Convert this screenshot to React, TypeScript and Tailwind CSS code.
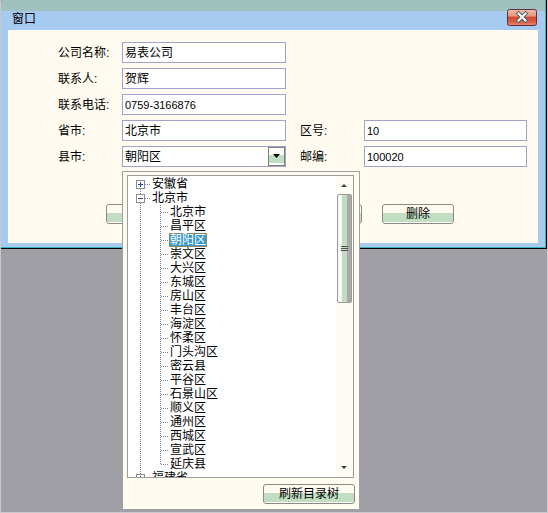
import type { ReactNode } from "react";

// Beijing districts shown under the expanded node of the drop-down tree.
const DISTRICTS = [
  "北京市",
  "昌平区",
  "朝阳区",
  "崇文区",
  "大兴区",
  "东城区",
  "房山区",
  "丰台区",
  "海淀区",
  "怀柔区",
  "门头沟区",
  "密云县",
  "平谷区",
  "石景山区",
  "顺义区",
  "通州区",
  "西城区",
  "宣武区",
  "延庆县",
];

const LINE = "#7c86a0";

function CloseButton() {
  return (
    <svg width="30" height="17" viewBox="0 0 30 17" className="-mt-[2px] shrink-0">
      <defs>
        <linearGradient id="close-bg" x1="0" y1="0" x2="0" y2="1">
          <stop offset="0" stopColor="#f2c0a8" />
          <stop offset="0.4" stopColor="#e8987c" />
          <stop offset="0.5" stopColor="#d04a32" />
          <stop offset="0.75" stopColor="#d85a42" />
          <stop offset="1" stopColor="#ea8a70" />
        </linearGradient>
      </defs>
      <rect x="0.5" y="0.5" width="29" height="16" rx="2" fill="url(#close-bg)" stroke="#5c2c4c" />
      <path d="M11.5 4.5 L18.5 11.5 M18.5 4.5 L11.5 11.5" stroke="#506070" strokeWidth="4" strokeLinecap="square" />
      <path d="M11.5 4.5 L18.5 11.5 M18.5 4.5 L11.5 11.5" stroke="#f4f8f0" strokeWidth="2" strokeLinecap="square" />
    </svg>
  );
}

function Field({
  label,
  value,
  numeric,
  width = "w-[164px]",
  combo,
}: {
  label: string;
  value: string;
  numeric?: boolean;
  width?: string;
  combo?: boolean;
}) {
  return (
    <>
      <span className="w-[64px] shrink-0 text-[12px] leading-[14px] text-black">{label}</span>
      <div
        className={`${width} h-[21px] shrink-0 border border-[#a2a2c8] bg-white flex items-center pl-[2px] pr-[2px]`}
      >
        <span className={`flex-1 leading-[14px] ${numeric ? "text-[11px]" : "text-[12px]"}`}>{value}</span>
        {combo && (
          <div className="w-[17px] h-[19px] -mr-[2px] border border-[#808080] bg-[linear-gradient(#fdfdf8_0%,#fdfdf8_40%,#c2dec2_40%,#c2dec2_90%,#fdfdf8_90%)] flex items-center justify-center">
            <svg width="9" height="5" viewBox="0 0 9 5">
              <polygon points="1,0 8,0 4.5,4" fill="#000" />
            </svg>
          </div>
        )}
      </div>
    </>
  );
}

function Btn({ children, className = "" }: { children?: ReactNode; className?: string }) {
  return (
    <div
      className={`h-[20px] shrink-0 rounded-[3px] border border-[#8a8a8a] bg-[linear-gradient(#fffbf0_0%,#fffbf0_45%,#c2dec2_45%,#c2dec2_92%,#fffbf0_92%)] flex items-center justify-center text-[12px] leading-[14px] ${className}`}
    >
      {children}
    </div>
  );
}

function RootRow({
  label,
  expanded,
  first,
  last,
}: {
  label: string;
  expanded?: boolean;
  first?: boolean;
  last?: boolean;
}) {
  return (
    <div className="flex h-[14px] items-center shrink-0">
      <svg width="24" height="14" viewBox="0 0 24 14" className="shrink-0" shapeRendering="crispEdges">
        {!first && <line x1="12.5" y1="0" x2="12.5" y2="3" stroke={LINE} strokeDasharray="1 1" />}
        {(!last || expanded) && <line x1="12.5" y1="12" x2="12.5" y2="14" stroke={LINE} strokeDasharray="1 1" />}
        <line x1="17" y1="7.5" x2="23" y2="7.5" stroke={LINE} strokeDasharray="1 1" />
        <rect x="8.5" y="3.5" width="8" height="8" fill="#fff" stroke="#8c8c8c" />
        <line x1="10" y1="7.5" x2="15" y2="7.5" stroke="#2c48b0" />
        {!expanded && <line x1="12.5" y1="5" x2="12.5" y2="10" stroke="#2c48b0" />}
      </svg>
      <span className="text-[12px] leading-[14px] whitespace-nowrap">{label}</span>
    </div>
  );
}

function ChildRow({ label, selected, last }: { label: string; selected?: boolean; last?: boolean }) {
  return (
    <div className="flex h-[14px] items-center shrink-0">
      <svg width="41" height="14" viewBox="0 0 41 14" className="shrink-0" shapeRendering="crispEdges">
        <line x1="12.5" y1="0" x2="12.5" y2="14" stroke={LINE} strokeDasharray="1 1" />
        <line x1="32.5" y1="0" x2="32.5" y2={last ? 8 : 14} stroke={LINE} strokeDasharray="1 1" />
        <line x1="33" y1="7.5" x2="41" y2="7.5" stroke={LINE} strokeDasharray="1 1" />
      </svg>
      <span
        className={`h-[14px] border text-[12px] leading-[12px] whitespace-nowrap ${
          selected ? "bg-[#3a9acb] text-white border-dotted border-[#d8780c]" : "border-transparent text-black"
        }`}
      >
        {label}
      </span>
    </div>
  );
}

function ScrollBar() {
  return (
    <div className="w-[17px] shrink-0 bg-[#fdfbf3] flex flex-col">
      <svg width="17" height="17" viewBox="0 0 17 17" className="shrink-0">
        <polygon points="5,11 11,11 8,8" fill="#3c3c3c" />
      </svg>
      <div className="ml-[1px] mt-[1px] w-[15px] h-[109px] rounded-[2px] border border-[#9c9c9c] bg-[linear-gradient(to_right,#f6f9f4_0%,#f6f9f4_30%,#c2dcc2_30%,#c2dcc2_72%,#a9a9a9_72%)] flex items-center justify-center">
        <svg width="7" height="6" viewBox="0 0 7 6" shapeRendering="crispEdges">
          <line x1="0" y1="0.5" x2="7" y2="0.5" stroke="#505050" />
          <line x1="0" y1="2.5" x2="7" y2="2.5" stroke="#505050" />
          <line x1="0" y1="4.5" x2="7" y2="4.5" stroke="#505050" />
        </svg>
      </div>
      <svg width="17" height="17" viewBox="0 0 17 17" className="mt-auto shrink-0">
        <polygon points="5,6 11,6 8,9" fill="#3c3c3c" />
      </svg>
    </div>
  );
}

function TreeDropdown() {
  return (
    <div className="absolute left-[121px] top-[171px] w-[238px] h-[339px] border border-[#a0a0a0] bg-[#fffbf0] pl-[4px] pr-[4px] pt-[3px] flex flex-col">
      <div className="w-[227px] h-[303px] shrink-0 border border-[#9c9c9c] bg-white flex">
        <div className="w-[208px] pt-[1px] flex flex-col overflow-hidden">
          <RootRow label="安徽省" first />
          <RootRow label="北京市" expanded />
          {DISTRICTS.map((d, i) => (
            <ChildRow key={d} label={d} selected={d === "朝阳区"} last={i === DISTRICTS.length - 1} />
          ))}
          <RootRow label="福建省" />
        </div>
        <ScrollBar />
      </div>
      <Btn className="w-[92px] mt-[6px] ml-auto">刷新目录树</Btn>
    </div>
  );
}

export default function App() {
  return (
    <div className="w-[548px] h-[513px] bg-[#a09fa5] border-x border-b border-[#c9c8cc] relative overflow-hidden font-['Liberation_Sans','Noto_Sans_CJK_SC',sans-serif] text-black">
      <div className="border-r border-b border-black">
        <div className="border-r border-b border-[#3ab4b4]">
          <div className="h-[11px] bg-[#a0c2bc] rounded-tl-[3px]" />
          <div className="h-[19px] bg-[#a6caf0] flex items-start justify-between pl-[11px] pr-[8px]">
            <span className="mt-[1px] text-[12px] leading-[14px]">窗口</span>
            <CloseButton />
          </div>
          <div className="bg-[#a6caf0] pl-[7px] pr-[7px] pb-[4px]">
            <div className="h-[213px] bg-[#fffbf0] pl-[50px] pt-[12px] flex flex-col">
              <div className="flex items-center h-[21px]">
                <Field label="公司名称:" value="易表公司" />
              </div>
              <div className="flex items-center h-[21px] mt-[5px]">
                <Field label="联系人:" value="贺辉" />
              </div>
              <div className="flex items-center h-[21px] mt-[5px]">
                <Field label="联系电话:" value="0759-3166876" numeric />
              </div>
              <div className="flex items-center h-[21px] mt-[5px]">
                <Field label="省市:" value="北京市" />
                <div className="w-[14px]" />
                <Field label="区号:" value="10" numeric width="w-[163px]" />
              </div>
              <div className="flex items-center h-[21px] mt-[5px]">
                <Field label="县市:" value="朝阳区" combo />
                <div className="w-[14px]" />
                <Field label="邮编:" value="100020" numeric width="w-[163px]" />
              </div>
              <div className="flex gap-[20px] ml-[48px] mt-[37px]">
                <Btn className="w-[72px]">添加</Btn>
                <Btn className="w-[72px]">修改</Btn>
                <Btn className="w-[72px]">保存</Btn>
                <Btn className="w-[72px]">删除</Btn>
              </div>
            </div>
          </div>
        </div>
      </div>
      <TreeDropdown />
    </div>
  );
}
